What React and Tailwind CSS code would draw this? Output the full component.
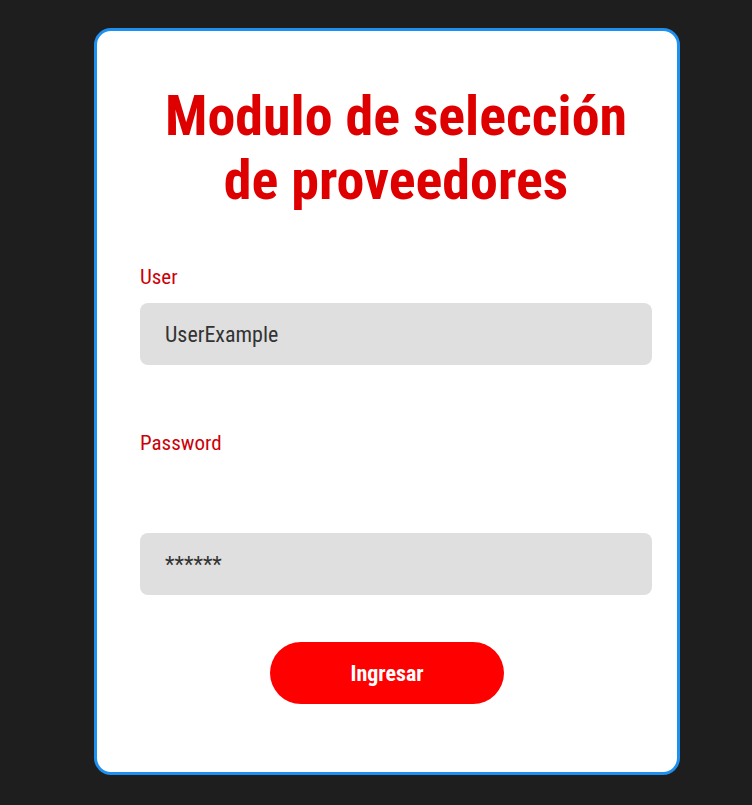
import React, { useState } from 'react';

const font = { fontFamily: '"Roboto Condensed", Roboto, "Liberation Sans", sans-serif', fontStretch: '75%' };

const Login = () => {
  const [user, setUser] = useState('UserExample');
  const [password, setPassword] = useState('******');

  return (
    <div className="min-h-[805px] bg-[#1e1e1e] pt-[28px] pb-[30px]" style={font}>
      <div className="ml-[94px] w-[586px] bg-white border-[3px] border-[#1e90f0] rounded-[17px] pt-[53px] pb-[68px]">
        <div className="ml-[43px] w-[512px]">
          <h1 className="text-center text-[56px] leading-[64px] font-bold text-[#de0000]">
            Modulo de selección de proveedores
          </h1>

          <form onSubmit={(e) => e.preventDefault()} className="mt-[51px]">
            <label className="block text-[21px] leading-[28px] text-[#cc0008]">User</label>
            <input
              type="text"
              value={user}
              onChange={(e) => setUser(e.target.value)}
              className="mt-[12px] block w-full h-[62px] bg-[#dfdfdf] rounded-[8px] px-[25px] text-[22px] text-[#333333] outline-none"
              style={font}
            />

            <label className="mt-[64px] block text-[21px] leading-[28px] text-[#cc0008]">Password</label>
            <input
              type="text"
              value={password}
              onChange={(e) => setPassword(e.target.value)}
              className="mt-[76px] block w-full h-[62px] bg-[#dfdfdf] rounded-[8px] px-[25px] text-[22px] text-[#333333] outline-none"
              style={font}
            />
          </form>
        </div>

        <div className="flex justify-center mt-[47px]">
          <button
            type="button"
            className="w-[234px] h-[62px] rounded-full bg-[#ff0000] text-white text-[22px] font-bold"
            style={font}
          >
            Ingresar
          </button>
        </div>
      </div>
    </div>
  );
};

export default function App() {
  return <Login />;
}
